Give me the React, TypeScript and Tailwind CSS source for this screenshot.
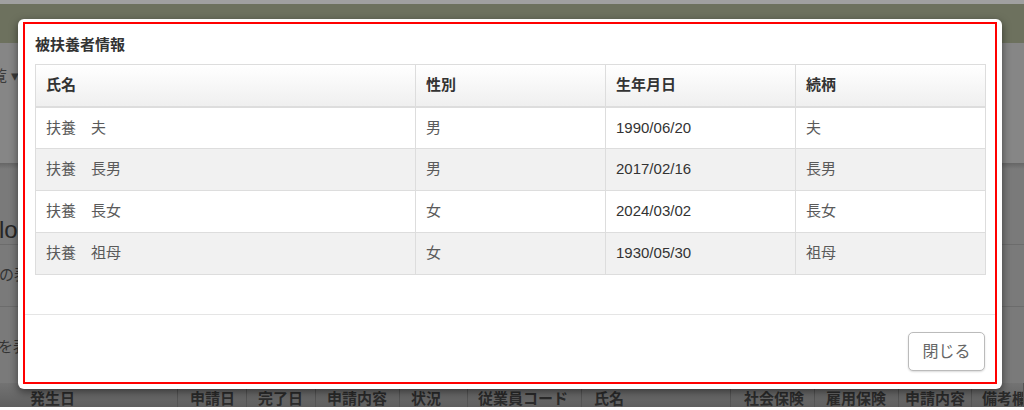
import React from 'react';

interface Dependent {
  name: string;
  gender: string;
  birthday: string;
  relation: string;
}

const dependents: Dependent[] = [
  { name: '扶養　夫', gender: '男', birthday: '1990/06/20', relation: '夫' },
  { name: '扶養　長男', gender: '男', birthday: '2017/02/16', relation: '長男' },
  { name: '扶養　長女', gender: '女', birthday: '2024/03/02', relation: '長女' },
  { name: '扶養　祖母', gender: '女', birthday: '1930/05/30', relation: '祖母' },
];

// columns of the list behind the dialog (only the bottom strip shows)
const backColumns: { label: string; w: string }[] = [
  { label: '発生日', w: 'w-[178px] pl-[30px]' },
  { label: '申請日', w: 'w-[69px] pl-[12px]' },
  { label: '完了日', w: 'w-[69px] pl-[11px]' },
  { label: '申請内容', w: 'w-[84px] pl-[11px]' },
  { label: '状況', w: 'w-[68px] pl-[11px]' },
  { label: '従業員コード', w: 'w-[114px] pl-[10px]' },
  { label: '氏名', w: 'w-[149px] pl-[12px]' },
  { label: '社会保険', w: 'w-[84px] pl-[13px]' },
  { label: '雇用保険', w: 'w-[84px] pl-[11px]' },
  { label: '申請内容', w: 'w-[73px] pl-[6px]' },
  { label: '備考欄', w: 'flex-1 pl-[10px]' },
];

/**
 * Dimmed page that sits behind the dialog.
 */
const BackPage = (): JSX.Element => (
  <div className="flex h-[410px] flex-col">
    <div className="h-[4px] bg-[#a0a0a0]" />
    <div className="h-[39px] bg-[#6d715e]" />
    <div className="h-[120px] bg-[#868686] pt-[22px] text-[15px] text-[#3a3a3a]">
      <span className="ml-[-8px]">覧 ▾</span>
    </div>
    <div className="h-[6px] bg-gradient-to-b from-[#666] to-[#7a7a7a]" />
    <div className="flex flex-1 flex-col bg-[#7a7a7a] text-[#262626]">
      <div className="flex h-[76px] items-end border-b border-[#6c6c6c] pb-[2px] text-[24px] leading-none">
        <span className="ml-[-1px]">lo</span>
      </div>
      <div className="flex h-[62px] items-center border-b border-[#6c6c6c] text-[15px] text-[#333]">
        <span className="ml-[-1px]">の表示</span>
      </div>
      <div className="flex h-[76px] items-center text-[15px] text-[#333]">
        <span className="ml-[-2px] mt-[4px]">を表示</span>
      </div>
      <div className="flex h-[24px] overflow-hidden bg-gradient-to-b from-[#737373] to-[#5f5f5f] text-[15px] font-bold text-[#2b2b2b]">
        {backColumns.map((c, i) => (
          <div
            key={i}
            className={`${c.w} overflow-hidden whitespace-nowrap border-r border-[#555] pt-[7px] leading-[18px]`}
          >
            {c.label}
          </div>
        ))}
      </div>
    </div>
    <div className="h-[3px] bg-white" />
  </div>
);

const DependentsDialog = (): JSX.Element => (
  <div className="absolute left-[18px] top-[19px] w-[984px] rounded-[6px] bg-white px-[5px] pb-[5px] pt-[3px] shadow-[0_3px_9px_rgba(0,0,0,0.5)]">
    <div className="flex h-[362px] flex-col border-2 border-[#f00]">
      <div className="px-[10px] pb-[39px] pt-[11px]">
        <h4 className="mb-[9px] text-[15px] font-bold leading-[20px] text-[#333]">被扶養者情報</h4>
        <table className="w-[950px] table-fixed border-collapse text-[15px]">
          <colgroup>
            <col className="w-[380px]" />
            <col className="w-[190px]" />
            <col className="w-[190px]" />
            <col className="w-[190px]" />
          </colgroup>
          <thead>
            <tr className="h-[42px] bg-gradient-to-b from-white to-[#efefef] text-left text-[#333]">
              <th className="border border-b-2 border-[#ddd] px-[10px] font-bold">氏名</th>
              <th className="border border-b-2 border-[#ddd] px-[10px] font-bold">性別</th>
              <th className="border border-b-2 border-[#ddd] px-[10px] font-bold">生年月日</th>
              <th className="border border-b-2 border-[#ddd] px-[10px] font-bold">続柄</th>
            </tr>
          </thead>
          <tbody>
            {dependents.map((d, i) => (
              <tr key={d.name} className={`h-[42px] ${i % 2 === 1 ? 'bg-[#f1f1f1]' : 'bg-white'}`}>
                <td className="border border-[#ddd] px-[10px] text-[#5a5a5a]">{d.name}</td>
                <td className="border border-[#ddd] px-[10px] text-[#5a5a5a]">{d.gender}</td>
                <td className="border border-[#ddd] px-[10px] text-[#333]">{d.birthday}</td>
                <td className="border border-[#ddd] px-[10px] text-[#5a5a5a]">{d.relation}</td>
              </tr>
            ))}
          </tbody>
        </table>
      </div>
      <div className="flex flex-1 justify-end border-t border-[#e5e5e5] px-[10px] pt-[17px]">
        <button className="h-[39px] w-[77px] rounded-[5px] border border-[#bbb] bg-white text-[16px] text-[#666] shadow-[0_1px_2px_rgba(0,0,0,0.15)]">
          閉じる
        </button>
      </div>
    </div>
  </div>
);

export default function App(): JSX.Element {
  return (
    <div className="relative h-[410px] w-[1024px] overflow-hidden font-['Liberation_Sans','Noto_Sans_CJK_JP',sans-serif]">
      <BackPage />
      <DependentsDialog />
    </div>
  );
}
